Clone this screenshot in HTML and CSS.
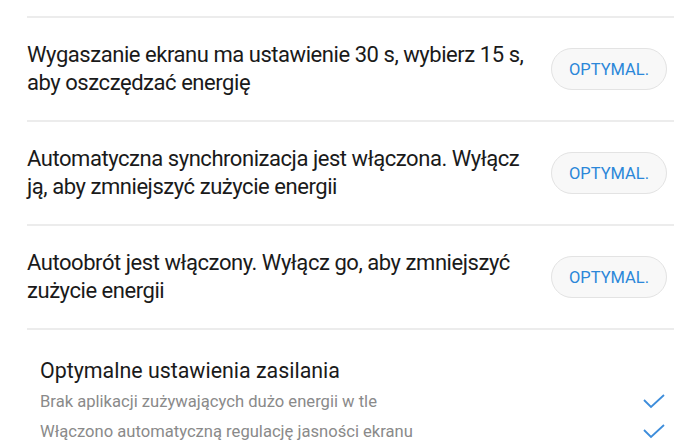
FILE: index.html
```html
<!DOCTYPE html>
<html>
<head>
  <link rel="stylesheet" href="styles.css">
</head>
<body>
  <div class="list">
    <div class="row">
      <div class="row-text">Wygaszanie ekranu ma ustawienie 30 s, wybierz 15 s, aby oszczędzać energię</div>
      <button class="opt-btn">OPTYMAL.</button>
    </div>
    <div class="row">
      <div class="row-text">Automatyczna synchronizacja jest włączona. Wyłącz ją, aby zmniejszyć zużycie energii</div>
      <button class="opt-btn">OPTYMAL.</button>
    </div>
    <div class="row">
      <div class="row-text">Autoobrót jest włączony. Wyłącz go, aby zmniejszyć zużycie energii</div>
      <button class="opt-btn">OPTYMAL.</button>
    </div>
  </div>

  <div class="optimal">
    <div class="optimal-title">Optymalne ustawienia zasilania</div>
    <div class="check-row">
      <span>Brak aplikacji zużywających dużo energii w tle</span>
      <svg class="check" viewBox="0 0 24 16" width="24" height="16"><path d="M2 7 L9 14 L22 2" /></svg>
    </div>
    <div class="check-row">
      <span>Włączono automatyczną regulację jasności ekranu</span>
      <svg class="check" viewBox="0 0 24 16" width="24" height="16"><path d="M2 7 L9 14 L22 2" /></svg>
    </div>
  </div>
</body>
</html>
```

FILE: styles.css
```css
body {
  margin: 0;
  background: #fff;
  font-family: Roboto, "Noto Sans", sans-serif;
  color: #1a1a1a;
  overflow: hidden;
}

.list {
  margin: 16px 26px 0 27px;
  border-top: 2px solid #ececec;
}

.row {
  display: flex;
  align-items: center;
  gap: 14px;
  height: 102px;
  border-bottom: 2px solid #ececec;
}

.row-text {
  flex: 1;
  font-size: 22px;
  line-height: 28px;
  letter-spacing: -0.45px;
}

.opt-btn {
  width: 116px;
  height: 42px;
  margin-right: 7px;
  border: 1px solid #e3e3e3;
  border-radius: 21px;
  background: #f8f8f8;
  color: #2b87d9;
  font-family: Roboto, sans-serif;
  font-size: 16.5px;
  padding: 0;
}

.optimal {
  padding: 27px 34px 0 40px;
}

.optimal-title {
  font-size: 21.4px;
  line-height: 28px;
  margin-bottom: 1px;
}

.check-row {
  display: flex;
  align-items: center;
  justify-content: space-between;
  height: 30px;
  font-size: 16.6px;
  color: #8a8a8a;
}

.check {
  fill: none;
  stroke: #3d8ddb;
  stroke-width: 1.8;
}
```
